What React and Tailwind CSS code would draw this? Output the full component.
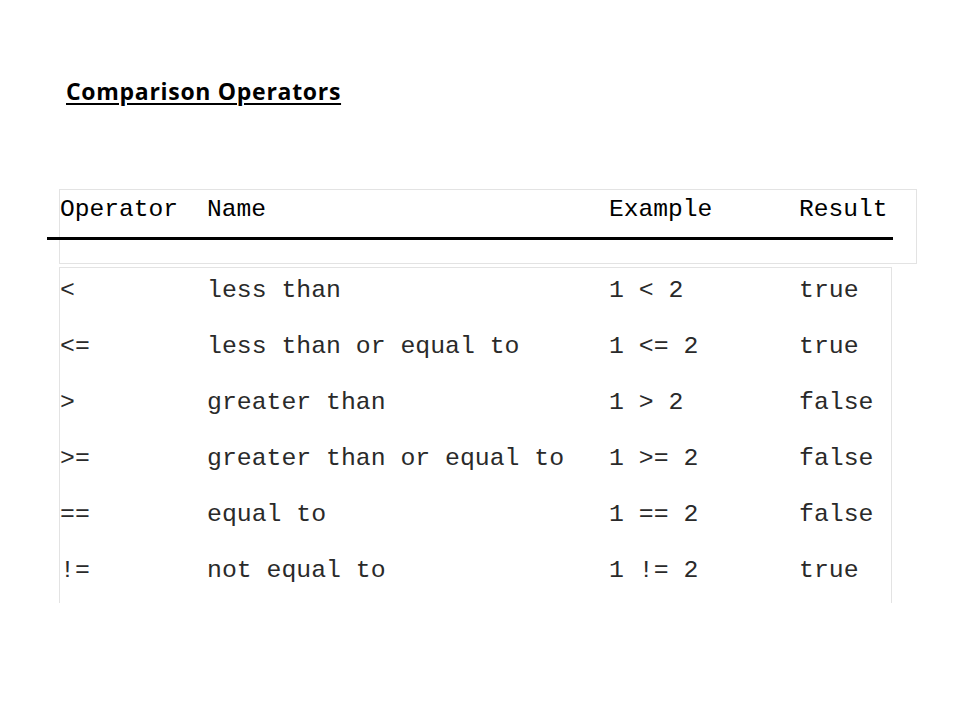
export default function App() {
    const rows = [
        { op: "<", name: "less than", example: "1 < 2", result: "true" },
        { op: "<=", name: "less than or equal to", example: "1 <= 2", result: "true" },
        { op: ">", name: "greater than", example: "1 > 2", result: "false" },
        { op: ">=", name: "greater than or equal to", example: "1 >= 2", result: "false" },
        { op: "==", name: "equal to", example: "1 == 2", result: "false" },
        { op: "!=", name: "not equal to", example: "1 != 2", result: "true" },
    ];

    return (
        <main className="w-[960px] min-h-[720px] bg-white pt-[76px]">
            <h1 className="ml-[66px] font-['Open_Sans',sans-serif] font-bold text-[23px] tracking-[0.7px] leading-[30px] text-black underline underline-offset-[3px] decoration-[2px]">
                Comparison Operators
            </h1>

            {/* header box */}
            <div className="mt-[83px] ml-[59px] w-[858px] h-[75px] border border-[#e3e3e3]">
                <div className="flex h-[36px] pt-[4px] items-center font-['Liberation_Mono',monospace] text-[24.6px] text-black whitespace-pre">
                    <span className="w-[147px]">Operator</span>
                    <span className="w-[402px]">Name</span>
                    <span className="w-[190px]">Example</span>
                    <span>Result</span>
                </div>
                <div className="mt-[11px] -ml-[13px] w-[846px] h-[3px] bg-black"></div>
            </div>

            {/* rows box */}
            <div className="mt-[3px] ml-[59px] w-[833px] h-[336px] border-t border-l border-r border-[#e3e3e3]">
                {rows.map((row) => (
                    <div key={row.op} className="flex h-[56px] pt-[6px] font-['Liberation_Mono',monospace] text-[24.8px] leading-[32px] text-[#2a2a2a] whitespace-pre">
                        <span className="w-[147px]">{row.op}</span>
                        <span className="w-[402px]">{row.name}</span>
                        <span className="w-[190px]">{row.example}</span>
                        <span>{row.result}</span>
                    </div>
                ))}
            </div>
        </main>
    );
}
